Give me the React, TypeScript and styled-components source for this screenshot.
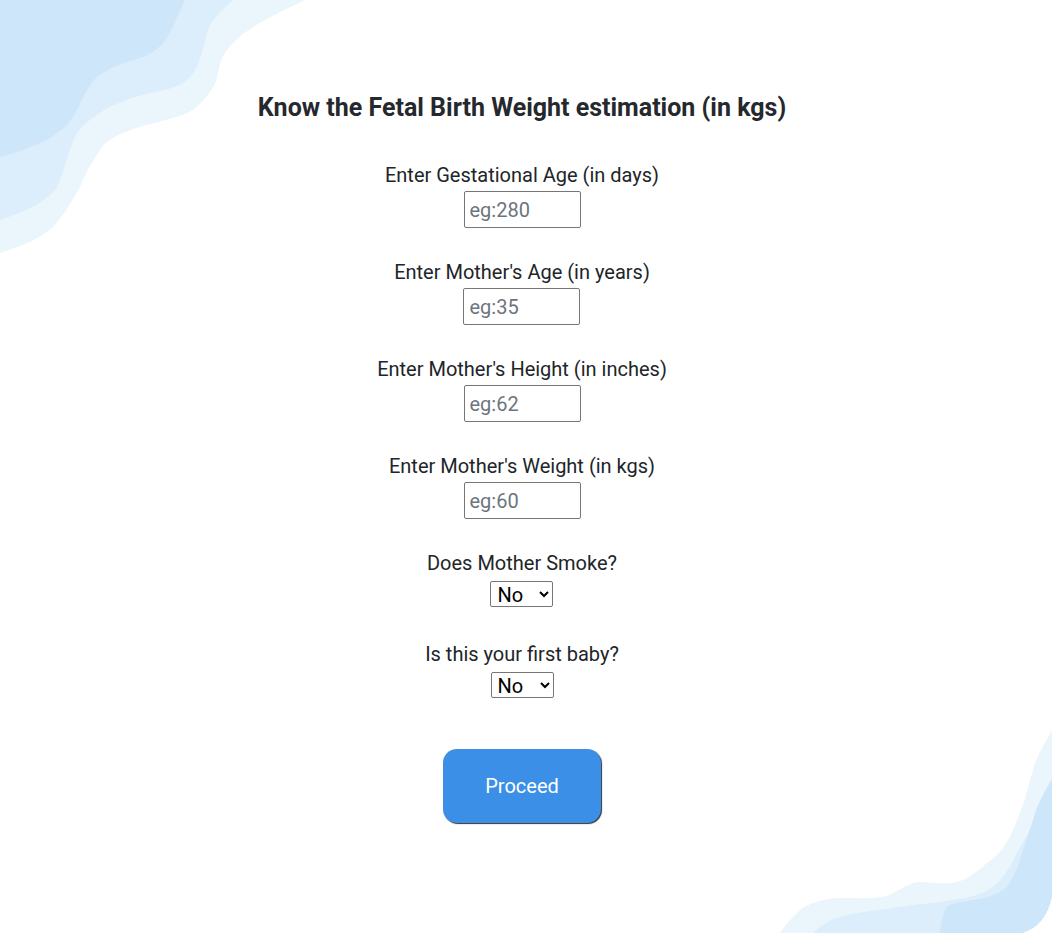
import React from "react";
import styled, { createGlobalStyle } from "styled-components";

const Global = createGlobalStyle`
  html, body { margin: 0; padding: 0; background: #ffffff; }
  body { font-family: Roboto, "Noto Sans", Arial, sans-serif; color: #212529; }
  * { box-sizing: border-box; }
`;

const Page = styled.div`
  position: relative;
  width: 1052px;
  height: 933px;
  overflow: hidden;
  background: #ffffff;
`;

const Decor = styled.svg<{ $corner: "tl" | "br" }>`
  position: absolute;
  ${(p) => (p.$corner === "tl" ? "top: 0; left: 0;" : "bottom: 0; right: 0;")}
  pointer-events: none;
`;

const Main = styled.main`
  position: relative;
  display: flex;
  flex-direction: column;
  align-items: center;
  padding: 94px 8px 0 0;
`;

const Title = styled.h2`
  margin: 0;
  font-size: 25px;
  line-height: 28px;
  font-weight: 700;
  color: #25282d;
`;

const Form = styled.form`
  display: flex;
  flex-direction: column;
  align-items: center;
  margin-top: 41px;
`;

const Field = styled.div<{ $gap: number; $space: number }>`
  display: flex;
  flex-direction: column;
  align-items: center;
  gap: ${(p) => p.$gap}px;
  margin-bottom: ${(p) => p.$space}px;
`;

const Label = styled.label`
  font-size: 20px;
  line-height: 24px;
  color: #212529;
`;

const Input = styled.input`
  width: 117px;
  height: 37px;
  padding: 0 5px;
  border: 1px solid #767676;
  border-radius: 2px;
  font-family: Roboto, Arial, sans-serif;
  font-size: 20px;
  color: #212529;
  background: #fff;
  &::placeholder { color: #6c757d; }
`;

const Select = styled.select`
  width: 63px;
  height: 26px;
  border: 1px solid #767676;
  border-radius: 2px;
  font-family: Roboto, Arial, sans-serif;
  font-size: 20px;
  color: #000;
  background: #fff;
  padding: 0 2px;
`;

const Button = styled.button`
  margin-top: 51px;
  width: 158px;
  height: 74px;
  border: none;
  border-radius: 14px;
  background: #3b8fe6;
  color: #ffffff;
  font-family: Roboto, Arial, sans-serif;
  font-size: 20px;
  box-shadow: 1px 1px 1px #333;
  cursor: pointer;
`;

const inputs = [
  { label: "Enter Gestational Age (in days)", ph: "eg:280" },
  { label: "Enter Mother's Age (in years)", ph: "eg:35" },
  { label: "Enter Mother's Height (in inches)", ph: "eg:62" },
  { label: "Enter Mother's Weight (in kgs)", ph: "eg:60" },
];

const selects = ["Does Mother Smoke?", "Is this your first baby?"];

export default function App() {
  return (
    <>
      <Global />
      <Page>
        <Decor $corner="tl" width="320" height="260" viewBox="0 0 320 260">
          <path fill="#ebf5fc" d="M0 0 H305 C285 10 250 25 233 43 C215 60 220 80 213 87 C205 100 195 110 187 113 C170 120 155 122 140 127 C120 133 105 140 100 150 C90 165 85 175 80 187 C70 205 60 220 53 227 C40 238 25 245 0 253 Z" />
          <path fill="#dcedfb" d="M0 0 H233 C222 10 210 20 207 33 C203 50 198 70 190 77 C180 88 165 90 150 93 C130 98 110 105 100 113 C90 120 82 125 77 133 C68 150 65 170 57 187 C48 200 30 210 0 220 Z" />
          <path fill="#cde6fa" d="M0 0 H185 C178 15 170 35 163 43 C155 52 145 57 133 60 C120 64 105 70 97 77 C88 85 82 100 77 110 C72 120 65 128 57 133 C45 142 25 150 0 157 Z" />
        </Decor>
        <Decor $corner="br" width="280" height="213" viewBox="0 0 280 213">
          <path fill="#ebf5fc" d="M280 10 C272 25 265 35 261 50 C255 70 252 85 245 100 C238 120 228 135 215 143 C205 152 195 160 181 163 C165 165 150 160 141 163 C130 167 120 175 111 177 C90 180 70 176 51 180 C40 183 30 187 25 193 C18 200 12 206 8 213 H250 Q274 206 280 176 Z" />
          <path fill="#dcedfb" d="M280 57 C276 65 272 75 268 87 C262 105 252 120 245 133 C238 148 230 160 221 167 C210 175 195 178 181 180 C165 183 145 184 128 187 C108 190 85 192 68 197 C55 201 47 207 41 213 H250 Q274 206 280 176 Z" />
          <path fill="#cde6fa" d="M280 60 C272 72 265 85 261 100 C256 115 252 128 248 140 C244 152 240 160 235 167 C225 176 212 178 201 180 C190 182 180 183 175 187 C170 195 169 205 168 213 H250 Q274 206 280 176 Z" />
        </Decor>
        <Main>
          <Title>Know the Fetal Birth Weight estimation (in kgs)</Title>
          <Form onSubmit={(e) => e.preventDefault()}>
            {inputs.map((f) => (
              <Field key={f.label} $gap={4} $space={32}>
                <Label>{f.label}</Label>
                <Input type="number" placeholder={f.ph} />
              </Field>
            ))}
            {selects.map((s, i) => (
              <Field key={s} $gap={6} $space={i === 0 ? 35 : 0}>
                <Label>{s}</Label>
                <Select defaultValue="No">
                  <option>No</option>
                  <option>Yes</option>
                </Select>
              </Field>
            ))}
            <Button type="submit">Proceed</Button>
          </Form>
        </Main>
      </Page>
    </>
  );
}
